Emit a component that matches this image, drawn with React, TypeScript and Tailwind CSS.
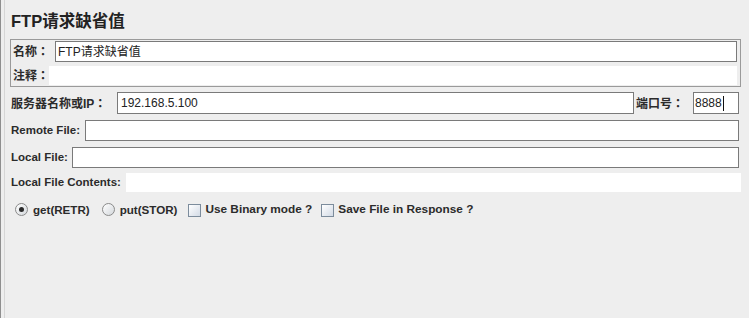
import React from "react";

const cjk = "font-['Liberation_Sans','Noto_Sans_CJK_SC',sans-serif]";

function Colon() {
  return <span className="font-['Noto_Sans_CJK_TC',sans-serif]">：</span>;
}

function Radio({ checked, label }: { checked?: boolean; label: string }) {
  return (
    <div className="flex items-center gap-[5px]">
      <span className="w-[13px] h-[13px] rounded-full border border-[#8a8a8a] bg-gradient-to-br from-[#ffffff] to-[#d4d8dc] flex items-center justify-center">
        {checked && <span className="w-[5px] h-[5px] rounded-full bg-[#2a2a2a]" />}
      </span>
      <span className="text-[11.6px] font-bold text-[#2b2b2b]">{label}</span>
    </div>
  );
}

function Check({ label }: { label: string }) {
  return (
    <div className="flex items-center gap-[4px]">
      <span className="w-[13px] h-[13px] border border-[#7c8c9c] bg-gradient-to-br from-[#ffffff] to-[#d3dbe6]" />
      <span className="text-[11.8px] font-bold text-[#2b2b2b]">{label}</span>
    </div>
  );
}

export default function App() {
  return (
    <div className={`w-[749px] h-[318px] bg-[#eeeeee] border-l border-[#8f8f8f] overflow-hidden ${cjk}`}>
      <div className="ml-[3px] h-full border-l border-[#d6d6d6]">
        {/* title */}
        <div className="pt-[10px] pl-[6px] h-[32px] text-[16.5px] leading-[22px] font-bold text-[#222]">
          FTP请求缺省值
        </div>

        {/* name / comment panel */}
        <div className="mt-[7px] ml-[5px] w-[731px] border border-[#9a9a9a] pt-[1px] pb-[1px] pr-[3px]">
          <div className="flex items-center h-[21px]">
            <span className="w-[44px] pl-[2px] text-[12px] font-bold text-[#2b2b2b] whitespace-nowrap">
              名称<Colon />
            </span>
            <div className="flex-1 h-full border border-[#7a7a7a] bg-white flex items-center px-[2px] text-[12px] text-[#222]">
              FTP请求缺省值
            </div>
          </div>
          <div className="flex items-center h-[19px] mt-[4px]">
            <span className="w-[38px] pl-[2px] text-[12px] font-bold text-[#2b2b2b] whitespace-nowrap">
              注释<Colon />
            </span>
            <div className="flex-1 h-full bg-white" />
          </div>
        </div>

        {/* server */}
        <div className="flex items-center h-[22px] mt-[5px] pl-[6px] pr-[10px]">
          <span className="w-[106px] text-[12px] font-bold text-[#2b2b2b] whitespace-nowrap">
            服务器名称或IP<Colon />
          </span>
          <div className="flex-1 h-full border border-[#7a7a7a] bg-white flex items-center px-[3px] text-[12px] text-[#222]">
            192.168.5.100
          </div>
          <span className="w-[59px] pl-[2px] text-[12px] font-bold text-[#2b2b2b] whitespace-nowrap">
            端口号<Colon />
          </span>
          <div className="w-[46px] h-full border border-[#7a7a7a] bg-white flex items-center pl-[1px] text-[12px] text-[#222]">
            8888
            <span className="w-[1px] h-[15px] bg-[#111] ml-[1px]" />
          </div>
        </div>

        {/* remote */}
        <div className="flex items-center h-[21px] mt-[6px] pl-[6px] pr-[10px]">
          <span className="w-[74px] text-[11.5px] font-bold text-[#2b2b2b]">Remote File:</span>
          <div className="flex-1 h-full border border-[#7a7a7a] bg-white" />
        </div>

        {/* local */}
        <div className="flex items-center h-[21px] mt-[6px] pl-[6px] pr-[10px]">
          <span className="w-[61px] text-[11.5px] font-bold text-[#2b2b2b]">Local File:</span>
          <div className="flex-1 h-full border border-[#7a7a7a] bg-white" />
        </div>

        {/* contents */}
        <div className="flex items-center h-[19px] mt-[5px] pl-[6px] pr-[8px]">
          <span className="w-[115px] text-[11.5px] font-bold text-[#2b2b2b] whitespace-nowrap">Local File Contents:</span>
          <div className="flex-1 h-full bg-white" />
        </div>

        {/* options */}
        <div className="flex items-center h-[20px] mt-[8px] pl-[10px]">
          <Radio checked label="get(RETR)" />
          <div className="ml-[12px]">
            <Radio label="put(STOR)" />
          </div>
          <div className="ml-[11px]">
            <Check label="Use Binary mode ?" />
          </div>
          <div className="ml-[9px]">
            <Check label="Save File in Response ?" />
          </div>
        </div>
      </div>
    </div>
  );
}
